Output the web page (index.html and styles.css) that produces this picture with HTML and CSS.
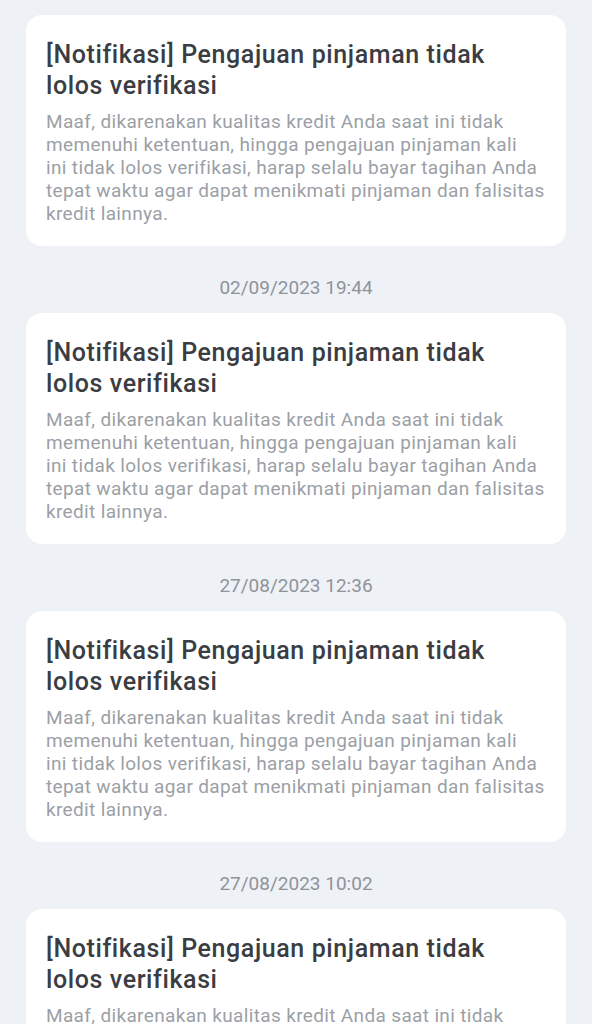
FILE: index.html
```html
<!DOCTYPE html>
<html lang="id">
<head>
  <meta charset="UTF-8" />
  <meta name="viewport" content="width=device-width, initial-scale=1" />
  <title>Notifikasi</title>
  <link rel="stylesheet" href="styles.css">
</head>
<body>
  <div class="lista">
    <div class="cartao">
      <h2>[Notifikasi] Pengajuan pinjaman tidak<br>lolos verifikasi</h2>
      <p>Maaf, dikarenakan kualitas kredit Anda saat ini tidak<br>memenuhi ketentuan, hingga pengajuan pinjaman kali<br>ini tidak lolos verifikasi, harap selalu bayar tagihan Anda<br>tepat waktu agar dapat menikmati pinjaman dan falisitas<br>kredit lainnya.</p>
    </div>

    <div class="data">02/09/2023 19:44</div>
    <div class="cartao">
      <h2>[Notifikasi] Pengajuan pinjaman tidak<br>lolos verifikasi</h2>
      <p>Maaf, dikarenakan kualitas kredit Anda saat ini tidak<br>memenuhi ketentuan, hingga pengajuan pinjaman kali<br>ini tidak lolos verifikasi, harap selalu bayar tagihan Anda<br>tepat waktu agar dapat menikmati pinjaman dan falisitas<br>kredit lainnya.</p>
    </div>

    <div class="data">27/08/2023 12:36</div>
    <div class="cartao">
      <h2>[Notifikasi] Pengajuan pinjaman tidak<br>lolos verifikasi</h2>
      <p>Maaf, dikarenakan kualitas kredit Anda saat ini tidak<br>memenuhi ketentuan, hingga pengajuan pinjaman kali<br>ini tidak lolos verifikasi, harap selalu bayar tagihan Anda<br>tepat waktu agar dapat menikmati pinjaman dan falisitas<br>kredit lainnya.</p>
    </div>

    <div class="data">27/08/2023 10:02</div>
    <div class="cartao">
      <h2>[Notifikasi] Pengajuan pinjaman tidak<br>lolos verifikasi</h2>
      <p>Maaf, dikarenakan kualitas kredit Anda saat ini tidak<br>memenuhi ketentuan, hingga pengajuan pinjaman kali<br>ini tidak lolos verifikasi, harap selalu bayar tagihan Anda<br>tepat waktu agar dapat menikmati pinjaman dan falisitas<br>kredit lainnya.</p>
    </div>
  </div>
</body>
</html>
```

FILE: styles.css
```css
* {
  box-sizing: border-box;
}

html, body {
  margin: 0;
  padding: 0;
  background: #eef1f6;
  font-family: Roboto, "Liberation Sans", sans-serif;
  overflow: hidden;
}

.lista {
  padding: 15px 26px;
  display: flex;
  flex-direction: column;
}

.cartao {
  background: #fff;
  border-radius: 16px;
  padding: 24px 20px 20px 20px;
  height: 231px;
  flex-shrink: 0;
}

.cartao h2 {
  margin: 0;
  font-size: 25px;
  font-weight: 500;
  letter-spacing: 0.6px;
  line-height: 31px;
  color: #3a3d42;
}

.cartao p {
  margin: 9px 0 0 0;
  font-size: 19px;
  letter-spacing: 0.35px;
  line-height: 23px;
  color: #9b9fa6;
}

.data {
  height: 67px;
  flex-shrink: 0;
  display: flex;
  align-items: flex-end;
  justify-content: center;
  padding-bottom: 14px;
  font-size: 19px;
  line-height: 22px;
  color: #8f939a;
}
```
